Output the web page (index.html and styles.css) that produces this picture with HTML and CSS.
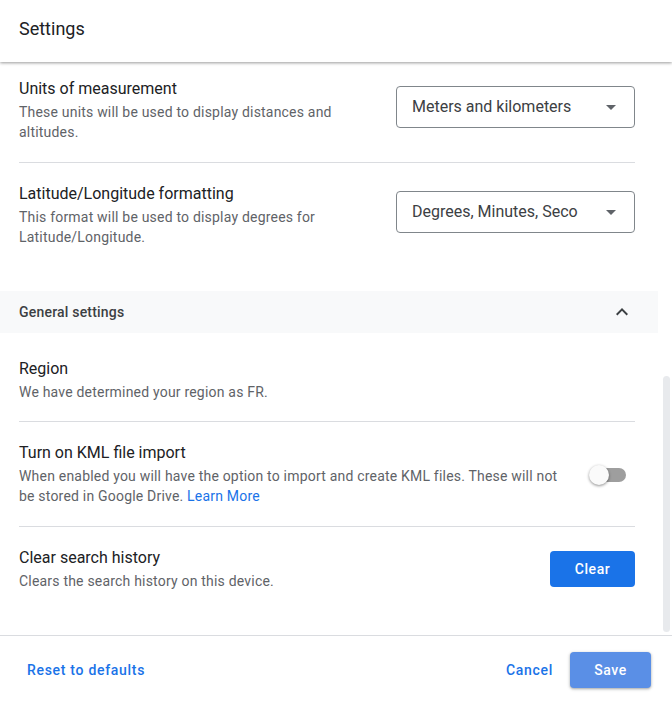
FILE: index.html
```html
<!DOCTYPE html>
<html>
<head>
<meta charset="utf-8">
<link rel="stylesheet" href="styles.css">
</head>
<body>
<div class="dialog">
  <div class="header">Settings</div>
  <div class="content">
    <div class="scroll">
      <div class="row first">
        <div class="text">
          <div class="title">Units of measurement</div>
          <div class="desc">These units will be used to display distances and altitudes.</div>
        </div>
        <div class="select">
          <span class="select-value">Meters and kilometers</span>
          <svg class="arrow" width="24" height="24" viewBox="0 0 24 24"><path d="M7 10l5 5 5-5z" fill="#5f6368"/></svg>
        </div>
      </div>
      <div class="row last-in-group">
        <div class="text">
          <div class="title">Latitude/Longitude formatting</div>
          <div class="desc">This format will be used to display degrees for Latitude/Longitude.</div>
        </div>
        <div class="select">
          <span class="select-value">Degrees, Minutes, Seconds</span>
          <svg class="arrow" width="24" height="24" viewBox="0 0 24 24"><path d="M7 10l5 5 5-5z" fill="#5f6368"/></svg>
        </div>
      </div>
      <div class="section-head">
        <span class="section-title">General settings</span>
        <svg width="24" height="24" viewBox="0 0 24 24"><path d="M12 8l-6 6 1.41 1.41L12 10.83l4.59 4.58L18 14z" fill="#3c4043"/></svg>
      </div>
      <div class="row after-head">
        <div class="text">
          <div class="title">Region</div>
          <div class="desc">We have determined your region as FR.</div>
        </div>
      </div>
      <div class="row">
        <div class="text">
          <div class="title">Turn on KML file import</div>
          <div class="desc">When enabled you will have the option to import and create KML files. These will not be stored in Google Drive. <span class="link">Learn More</span></div>
        </div>
        <div class="toggle-wrap">
          <div class="toggle"><div class="track"></div><div class="thumb"></div></div>
        </div>
      </div>
      <div class="row noline">
        <div class="text">
          <div class="title">Clear search history</div>
          <div class="desc">Clears the search history on this device.</div>
        </div>
        <button class="btn-clear">Clear</button>
      </div>
    </div>
    <div class="scrollbar"></div>
  </div>
  <div class="footer">
    <button class="text-btn">Reset to defaults</button>
    <div class="spacer"></div>
    <button class="text-btn cancel">Cancel</button>
    <button class="btn-save">Save</button>
  </div>
</div>
</body>
</html>
```
FILE: styles.css
```css
html, body {
  margin: 0;
  padding: 0;
  background: #fff;
  font-family: Roboto, "Liberation Sans", Arial, sans-serif;
}
.dialog {
  width: 672px;
  height: 707px;
  display: flex;
  flex-direction: column;
  overflow: hidden;
}
.header {
  height: 62px;
  flex: none;
  display: flex;
  align-items: center;
  padding-left: 19px;
  padding-bottom: 6px;
  box-sizing: border-box;
  font-size: 18px;
  color: #202124;
  position: relative;
  z-index: 2;
  box-shadow: 0 1px 3px rgba(0, 0, 0, 0.4);
}
.content {
  flex: 1;
  position: relative;
  overflow: hidden;
}
.scroll {
  width: 658px;
}
.row {
  margin: 0 23px 0 19px;
  padding: 19px 0 20px;
  border-bottom: 1px solid #dadce0;
  display: flex;
  align-items: flex-start;
  gap: 40px;
}
.row.first {
  padding-top: 15px;
  padding-bottom: 20px;
}
.row.last-in-group {
  border-bottom: none;
  padding-bottom: 20px;
  margin-bottom: 24px;
}
.row.after-head {
  padding-top: 24px;
  padding-bottom: 19px;
}
.row.noline {
  border-bottom: none;
}
.text {
  flex: 1;
  min-width: 0;
}
.title {
  font-size: 16px;
  line-height: 24px;
  color: #202124;
}
.desc {
  margin-top: 1px;
  font-size: 14px;
  line-height: 20px;
  color: #5f6368;
  letter-spacing: 0.2px;
}
.link {
  color: #1a73e8;
}
.select {
  flex: none;
  width: 239px;
  height: 42px;
  box-sizing: border-box;
  border: 1px solid #80868b;
  border-radius: 4px;
  display: flex;
  align-items: center;
  padding: 0 11px 0 15px;
  margin-top: 9px;
}
.select-value {
  width: 166px;
  overflow: hidden;
  white-space: nowrap;
  font-size: 16px;
  color: #3c4043;
  margin-top: -1px;
}
.arrow {
  margin-left: auto;
}
.section-head {
  height: 42px;
  background: #f8f9fa;
  display: flex;
  align-items: center;
  justify-content: space-between;
  padding: 0 24px 0 19px;
}
.section-title {
  font-size: 14px;
  font-weight: 500;
  color: #3c4043;
  letter-spacing: 0.2px;
}
.toggle-wrap {
  flex: none;
  width: 46px;
  margin-left: -16px;
  margin-top: 24px;
  display: flex;
}
.toggle {
  position: relative;
  width: 38px;
  height: 20px;
}
.track {
  position: absolute;
  left: 2px;
  top: 3px;
  width: 35px;
  height: 14px;
  border-radius: 7px;
  background: #9e9e9e;
}
.thumb {
  position: absolute;
  left: 0;
  top: 0;
  width: 20px;
  height: 20px;
  border-radius: 50%;
  background: #fafafa;
  box-shadow: 0 1px 3px rgba(0, 0, 0, 0.45);
}
button {
  font-family: Roboto, "Liberation Sans", Arial, sans-serif;
  border: none;
  cursor: pointer;
}
.btn-clear {
  flex: none;
  width: 85px;
  height: 36px;
  border-radius: 4px;
  background: #1a73e8;
  color: #fff;
  font-size: 14px;
  font-weight: 500;
  letter-spacing: 0.6px;
  margin-top: 5px;
}
.scrollbar {
  position: absolute;
  right: 2px;
  top: 314px;
  width: 7px;
  height: 256px;
  border-radius: 4px;
  background: #e8eaed;
}
.footer {
  flex: none;
  height: 72px;
  box-sizing: border-box;
  border-top: 1px solid #dadce0;
  display: flex;
  align-items: flex-start;
  padding: 16px 21px 0 19px;
}
.spacer {
  flex: 1;
}
.text-btn {
  background: none;
  height: 36px;
  padding: 0 8px;
  color: #1a73e8;
  font-size: 14px;
  font-weight: 500;
  letter-spacing: 0.7px;
}
.cancel {
  margin-right: 9px;
}
.btn-save {
  width: 81px;
  height: 36px;
  border-radius: 4px;
  background: #5a8fe6;
  color: #fff;
  font-size: 14px;
  font-weight: 500;
  letter-spacing: 0.6px;
  box-shadow: 0 1px 2px rgba(60, 64, 67, 0.3), 0 1px 3px 1px rgba(60, 64, 67, 0.15);
}
```
